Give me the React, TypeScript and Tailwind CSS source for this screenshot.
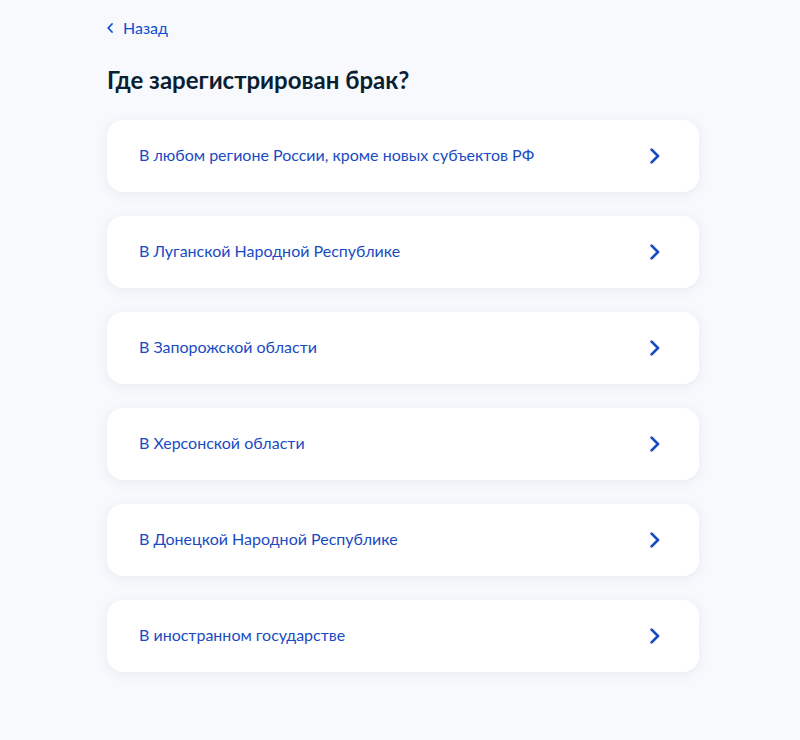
const options = [
    "В любом регионе России, кроме новых субъектов РФ",
    "В Луганской Народной Республике",
    "В Запорожской области",
    "В Херсонской области",
    "В Донецкой Народной Республике",
    "В иностранном государстве",
]

function Chevron({ className }: { className?: string }) {
    return (
        <svg className={className} viewBox="0 0 10 16" fill="none">
            <path d="M1.6 1.6 L8 8 L1.6 14.4" stroke="currentColor" strokeWidth="2.7" strokeLinecap="round" strokeLinejoin="round" />
        </svg>
    )
}

export default function App() {
    return (
        <div className="min-h-[740px] w-full bg-[#f7f9fc] font-['Lato','Liberation_Sans',sans-serif]">
            <div className="w-[592px] ml-[107px] pt-4 pb-16">
                <button className="flex items-center gap-[10px] text-[#0d4cd3] text-base leading-6">
                    <svg className="w-[6px] h-[10px]" viewBox="0 0 6 10" fill="none">
                        <path d="M5 1 L1.2 5 L5 9" stroke="currentColor" strokeWidth="1.8" strokeLinecap="round" strokeLinejoin="round" />
                    </svg>
                    Назад
                </button>
                <h1 className="mt-6 text-[24px] leading-8 font-bold text-[#0b1f33]">Где зарегистрирован брак?</h1>
                <div className="mt-6 flex flex-col gap-6">
                    {options.map((o, i) => (
                        <div key={i} className="h-[72px] bg-white rounded-2xl shadow-[0_2px_12px_rgba(86,120,180,0.10)] flex items-center justify-between pl-8 pr-[39px]">
                            <span className="text-base leading-6 mb-[3px] text-[#1a4bc4]">{o}</span>
                            <Chevron className="w-[10px] h-4 text-[#1a4bc4]" />
                        </div>
                    ))}
                </div>
            </div>
        </div>
    )
}
